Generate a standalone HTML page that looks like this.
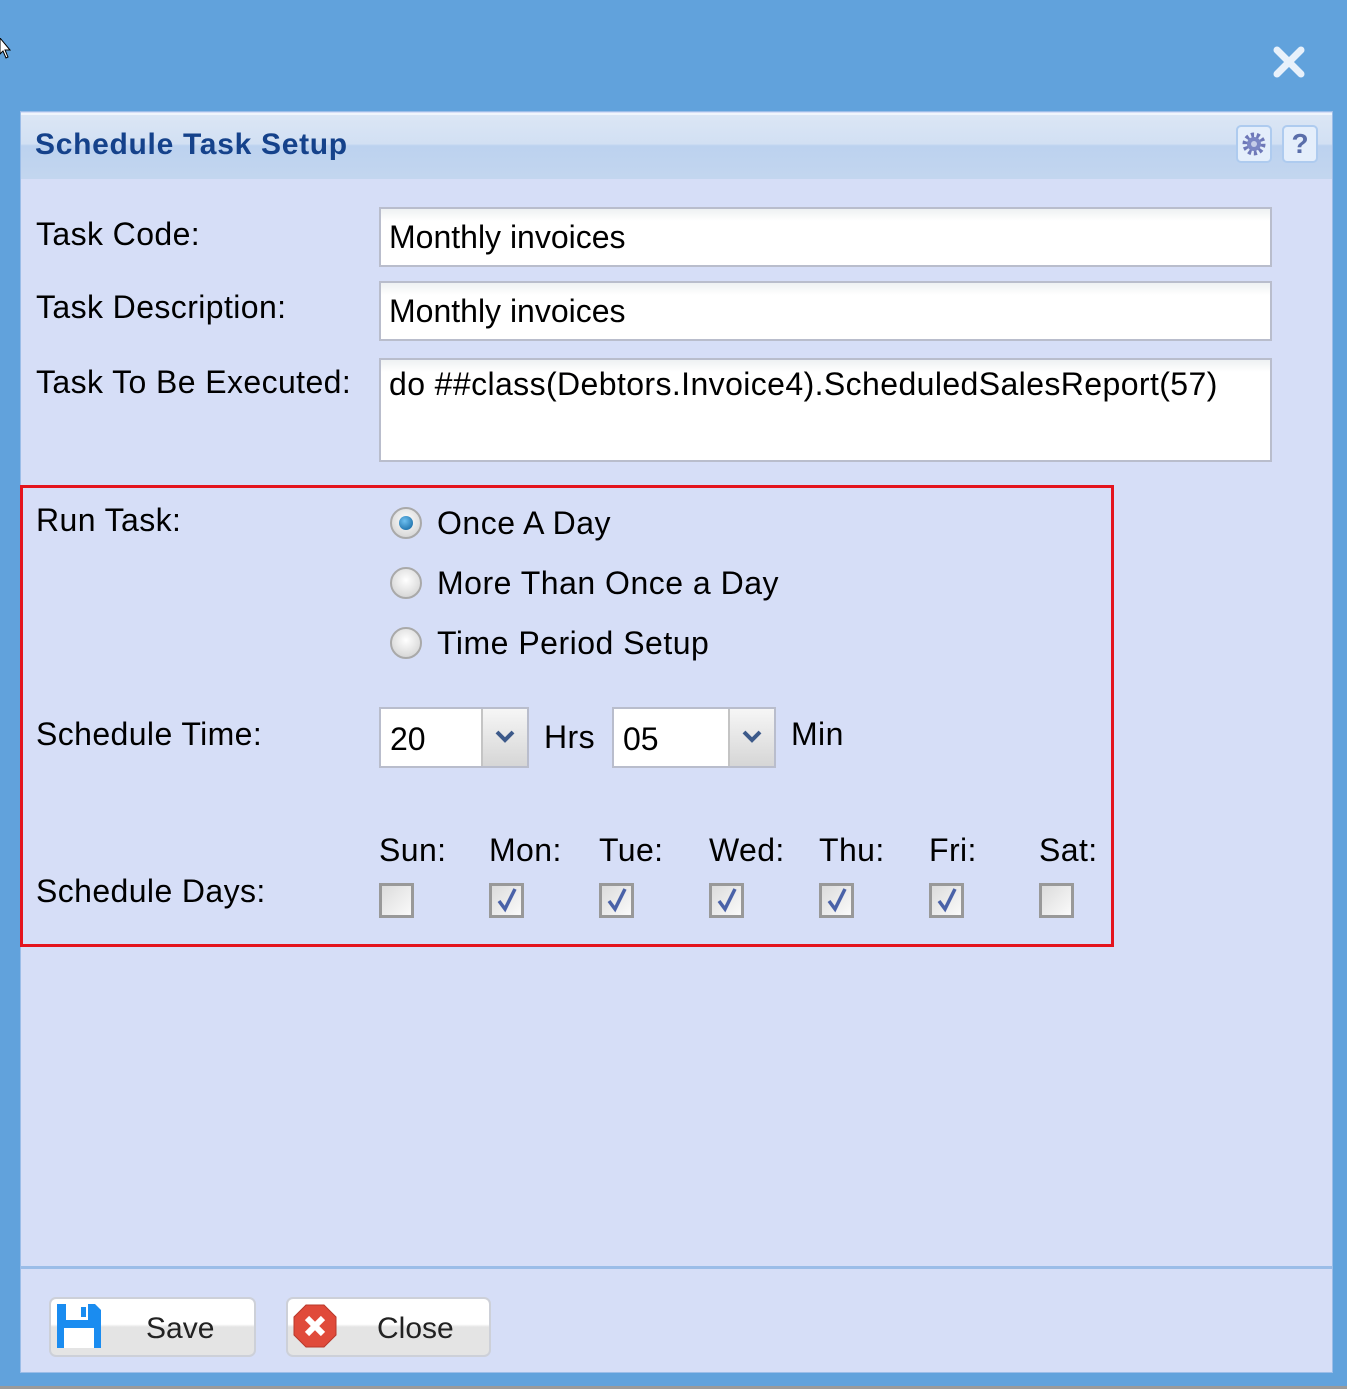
<!DOCTYPE html>
<html><head><meta charset="utf-8"><style>
*{margin:0;padding:0;box-sizing:border-box}
body{width:1347px;height:1389px;background:#61a2dc;position:relative;overflow:hidden;font-family:"Liberation Sans",Arial,sans-serif;color:#000}
.a{position:absolute}
.lbl{position:absolute;font-size:32px;line-height:36px;white-space:nowrap;letter-spacing:0.4px}
.inp{position:absolute;background:linear-gradient(#eef1f2,#fff 12px);border:2px solid #b9bdcc;font-size:32px;line-height:36px;padding:10px 8px;white-space:nowrap}
.radio{position:absolute;width:32px;height:32px;border-radius:50%;border:2px solid #a9a9a9;background:radial-gradient(circle at 50% 40%,#fff,#d6d6d6 80%)}
.cb{position:absolute;width:35px;height:35px;border:3px solid #999;background:linear-gradient(135deg,#dcdcdc,#fafafa)}
.cb svg{position:absolute;left:3px;top:1px}
.sel{position:absolute;height:61px;border:2px solid #b9bdcc;background:#fff}
.sel .btn{position:absolute;right:0;top:0;bottom:0;width:46px;border-left:2px solid #c4c4c4;background:linear-gradient(#f6f6f6,#d6d6d6)}
.sel span{position:absolute;left:9px;top:12px;font-size:32px;line-height:36px}
.fbtn{position:absolute;top:1297px;height:60px;border:2px solid #cdd0d8;border-radius:7px;background:linear-gradient(#fff 45%,#e4e4e4 50%)}
.fbtn span{position:absolute;font-size:30px;line-height:34px;top:13px;color:#222}
.rl{letter-spacing:0.5px}
</style></head><body>
<svg class="a" style="left:0;top:38px" width="12" height="22" viewBox="0 0 12 22"><path d="M0 0 L0 16 L3 13 L6 20 L8 19 L5 12 L10 12 Z" fill="#fff" stroke="#000" stroke-width="1"/></svg>
<svg class="a" style="left:1272px;top:45px" width="34" height="34" viewBox="0 0 34 34"><path d="M5 5 L29 29 M29 5 L5 29" stroke="#e8f1fb" stroke-width="7" stroke-linecap="round"/></svg>

<div class="a" style="left:20px;top:111px;width:1313px;height:1262px;background:#d6def7;border:1px solid #9bbde8"></div>
<div class="a" style="left:21px;top:113px;width:1311px;height:66px;background:linear-gradient(#dbe6f5 0%,#d2e0f3 45%,#bcd2ef 48%,#c3d6ef 100%);border-top:2px solid #f0f5fc"></div>
<div class="lbl" style="left:35px;top:127px;font-size:30px;letter-spacing:0.7px;font-weight:bold;color:#15428b">Schedule Task Setup</div>
<div class="a" style="left:1236px;top:125px;width:36px;height:38px;border:2px solid #aecbef;border-radius:5px;background:#e4eefb"></div>
<svg class="a" style="left:1241px;top:131px" width="26" height="26" viewBox="0 0 26 26"><circle cx="13" cy="13" r="9" fill="none" stroke="#6e78b8" stroke-width="5" stroke-dasharray="3 2.6"/><circle cx="13" cy="13" r="7" fill="#7b86c4"/><circle cx="13" cy="13" r="3" fill="#c6cde8"/></svg>
<div class="a" style="left:1282px;top:125px;width:36px;height:38px;border:2px solid #aecbef;border-radius:5px;background:#e4eefb;font-weight:bold;font-size:28px;color:#5a6eaa;text-align:center;line-height:34px">?</div>

<div class="lbl" style="left:36px;top:216px">Task Code:</div>
<div class="lbl" style="left:36px;top:289px">Task Description:</div>
<div class="lbl" style="left:36px;top:364px">Task To Be Executed:</div>
<div class="inp" style="left:379px;top:207px;width:893px;height:60px">Monthly invoices</div>
<div class="inp" style="left:379px;top:281px;width:893px;height:60px">Monthly invoices</div>
<div class="inp" style="left:379px;top:358px;width:893px;height:104px;padding-top:6px;letter-spacing:0.4px">do ##class(Debtors.Invoice4).ScheduledSalesReport(57)</div>

<div class="a" style="left:20px;top:485px;width:1094px;height:462px;border:3px solid #e4141e"></div>
<div class="lbl" style="left:36px;top:502px">Run Task:</div>
<div class="radio" style="left:390px;top:507px"><div class="a" style="left:7px;top:7px;width:14px;height:14px;border-radius:50%;background:radial-gradient(circle at 40% 35%,#6fc0f0,#0a5e9a)"></div></div>
<div class="radio" style="left:390px;top:567px"></div>
<div class="radio" style="left:390px;top:627px"></div>
<div class="lbl rl" style="left:437px;top:505px">Once A Day</div>
<div class="lbl rl" style="left:437px;top:565px">More Than Once a Day</div>
<div class="lbl rl" style="left:437px;top:625px">Time Period Setup</div>

<div class="lbl" style="left:36px;top:716px">Schedule Time:</div>
<div class="sel" style="left:379px;top:707px;width:150px"><span>20</span><div class="btn"><svg style="position:absolute;left:12px;top:20px" width="20" height="14" viewBox="0 0 20 14"><path d="M2 3 L10 11 L18 3" fill="none" stroke="#3d5a8a" stroke-width="4"/></svg></div></div>
<div class="lbl" style="left:544px;top:719px">Hrs</div>
<div class="sel" style="left:612px;top:707px;width:164px"><span>05</span><div class="btn"><svg style="position:absolute;left:12px;top:20px" width="20" height="14" viewBox="0 0 20 14"><path d="M2 3 L10 11 L18 3" fill="none" stroke="#3d5a8a" stroke-width="4"/></svg></div></div>
<div class="lbl" style="left:791px;top:716px">Min</div>

<div class="lbl" style="left:36px;top:873px">Schedule Days:</div>
<div class="lbl" style="left:379px;top:832px">Sun:</div>
<div class="lbl" style="left:489px;top:832px">Mon:</div>
<div class="lbl" style="left:599px;top:832px">Tue:</div>
<div class="lbl" style="left:709px;top:832px">Wed:</div>
<div class="lbl" style="left:819px;top:832px">Thu:</div>
<div class="lbl" style="left:929px;top:832px">Fri:</div>
<div class="lbl" style="left:1039px;top:832px">Sat:</div>
<div class="cb" style="left:379px;top:883px"></div>
<div class="cb" style="left:489px;top:883px"><svg width="24" height="26" viewBox="0 0 24 26"><path d="M4 14 L10 22 L20 2" fill="none" stroke="#4a62a8" stroke-width="3.5"/></svg></div>
<div class="cb" style="left:599px;top:883px"><svg width="24" height="26" viewBox="0 0 24 26"><path d="M4 14 L10 22 L20 2" fill="none" stroke="#4a62a8" stroke-width="3.5"/></svg></div>
<div class="cb" style="left:709px;top:883px"><svg width="24" height="26" viewBox="0 0 24 26"><path d="M4 14 L10 22 L20 2" fill="none" stroke="#4a62a8" stroke-width="3.5"/></svg></div>
<div class="cb" style="left:819px;top:883px"><svg width="24" height="26" viewBox="0 0 24 26"><path d="M4 14 L10 22 L20 2" fill="none" stroke="#4a62a8" stroke-width="3.5"/></svg></div>
<div class="cb" style="left:929px;top:883px"><svg width="24" height="26" viewBox="0 0 24 26"><path d="M4 14 L10 22 L20 2" fill="none" stroke="#4a62a8" stroke-width="3.5"/></svg></div>
<div class="cb" style="left:1039px;top:883px"></div>

<div class="a" style="left:21px;top:1266px;width:1311px;height:3px;background:#9bbde8"></div>

<div class="fbtn" style="left:49px;width:207px">
<svg style="position:absolute;left:6px;top:5px" width="46" height="46" viewBox="0 0 46 46"><path d="M0 0 H38 L44 6 V44 H0 Z" fill="#1a8cf0"/><rect x="9" y="0" width="22" height="16" fill="#fff"/><rect x="24" y="3" width="5" height="10" fill="#1a8cf0"/><rect x="7" y="24" width="30" height="20" fill="#fff"/></svg>
<span style="left:95px">Save</span></div>
<div class="fbtn" style="left:286px;width:205px">
<svg style="position:absolute;left:5px;top:5px" width="44" height="44" viewBox="0 0 44 44"><path d="M13 1 H31 L43 13 V31 L31 43 H13 L1 31 V13 Z" fill="#e04a3a" stroke="#b8382a" stroke-width="1"/><path d="M14 14 L30 30 M30 14 L14 30" stroke="#fff" stroke-width="6"/></svg>
<span style="left:89px">Close</span></div>

<div class="a" style="left:0;top:1386px;width:1347px;height:3px;background:#9a9a9a"></div>
</body></html>
